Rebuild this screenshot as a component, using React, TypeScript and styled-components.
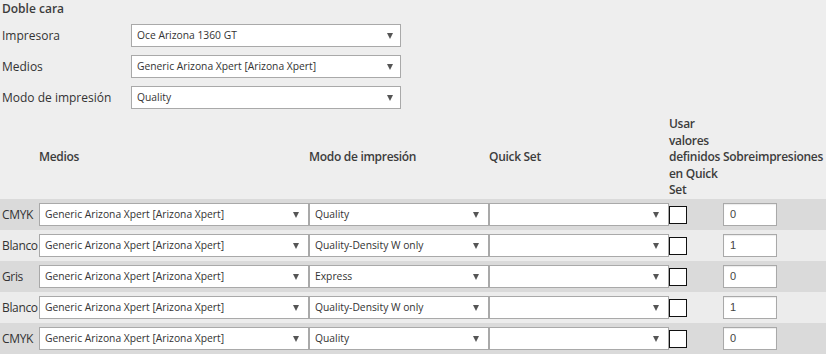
import React from 'react';
import styled, { createGlobalStyle } from 'styled-components';

const GlobalStyle = createGlobalStyle`
  html, body {
    margin: 0;
    padding: 0;
    background: #eeeeee;
  }
  body {
    font-family: "Open Sans", "Noto Sans", sans-serif;
    font-size: 12px;
    color: #333333;
  }
`;

const Page = styled.div`
  width: 826px;
  height: 354px;
  overflow: hidden;
`;

const Title = styled.div`
  font-weight: 600;
  color: #3c3c3c;
  line-height: 17px;
  padding-left: 2px;
`;

const Form = styled.div`
  display: grid;
  grid-template-columns: 131px 270px;
  grid-auto-rows: 23px;
  row-gap: 8px;
  margin-top: 7px;
`;

const FieldLabel = styled.label`
  padding-left: 2px;
  align-self: center;
  white-space: nowrap;
`;

const SelectBox = styled.div<{ $width?: number }>`
  position: relative;
  box-sizing: border-box;
  height: 23px;
  width: ${(p) => (p.$width ? `${p.$width}px` : '100%')};
  border: 1px solid #a9a9a9;
  background: #ffffff;
  font-size: 10.3px;
  line-height: 21px;
  padding: 0 22px 0 5px;
  white-space: nowrap;
  overflow: hidden;
  color: #333333;

  &::after {
    content: '';
    position: absolute;
    right: ${(p) => (p.$width ? '9px' : '7px')};
    top: 8px;
    border-left: 3.5px solid transparent;
    border-right: 3.5px solid transparent;
    border-top: 6px solid #555555;
  }
`;

const Grid = `
  display: grid;
  grid-template-columns: 39px 270px 180px 180px 54px 1fr;
`;

const HeaderRow = styled.div`
  ${Grid};
  height: 83px;
  margin-top: 7px;
  align-items: center;
  font-weight: 600;
  color: #3c3c3c;
  line-height: 16.6px;
  letter-spacing: -0.3px;
`;

const HeaderCell = styled.div<{ $wrap?: boolean }>`
  white-space: ${(p) => (p.$wrap ? 'normal' : 'nowrap')};
  overflow: visible;
`;

const Row = styled.div<{ $dark: boolean }>`
  ${Grid};
  height: 31px;
  align-items: center;
  background: ${(p) => (p.$dark ? '#dadada' : '#ececec')};
`;

const RowLabel = styled.div`
  padding-left: 2px;
  white-space: nowrap;
  letter-spacing: -0.35px;
`;

const Check = styled.div`
  box-sizing: border-box;
  width: 18px;
  height: 18px;
  border: 1.5px solid #111111;
  background: #ffffff;
`;

const NumberBox = styled.div`
  box-sizing: border-box;
  width: 54px;
  height: 23px;
  border: 1px solid #a9a9a9;
  background: #ffffff;
  box-shadow: inset 0 1px 1px rgba(0, 0, 0, 0.08);
  font-family: "Liberation Sans", Arial, sans-serif;
  font-size: 11px;
  line-height: 21px;
  padding-left: 6px;
  color: #444444;
`;

const rows = [
  { ink: 'CMYK', mode: 'Quality', over: '0' },
  { ink: 'Blanco', mode: 'Quality-Density W only', over: '1' },
  { ink: 'Gris', mode: 'Express', over: '0' },
  { ink: 'Blanco', mode: 'Quality-Density W only', over: '1' },
  { ink: 'CMYK', mode: 'Quality', over: '0' },
];

const App: React.FC = () => {
  return (
    <Page>
      <GlobalStyle />
      <Title>Doble cara</Title>
      <Form>
        <FieldLabel>Impresora</FieldLabel>
        <SelectBox>Oce Arizona 1360 GT</SelectBox>
        <FieldLabel>Medios</FieldLabel>
        <SelectBox>Generic Arizona Xpert [Arizona Xpert]</SelectBox>
        <FieldLabel>Modo de impresión</FieldLabel>
        <SelectBox>Quality</SelectBox>
      </Form>

      <HeaderRow>
        <HeaderCell />
        <HeaderCell>Medios</HeaderCell>
        <HeaderCell>Modo de impresión</HeaderCell>
        <HeaderCell>Quick Set</HeaderCell>
        <HeaderCell $wrap>Usar valores definidos en Quick Set</HeaderCell>
        <HeaderCell>Sobreimpresiones</HeaderCell>
      </HeaderRow>

      {rows.map((r, i) => (
        <Row key={i} $dark={i % 2 === 0}>
          <RowLabel>{r.ink}</RowLabel>
          <SelectBox $width={270}>Generic Arizona Xpert [Arizona Xpert]</SelectBox>
          <SelectBox $width={180}>{r.mode}</SelectBox>
          <SelectBox $width={180} />
          <Check />
          <NumberBox>{r.over}</NumberBox>
        </Row>
      ))}
    </Page>
  );
};

export default App;
